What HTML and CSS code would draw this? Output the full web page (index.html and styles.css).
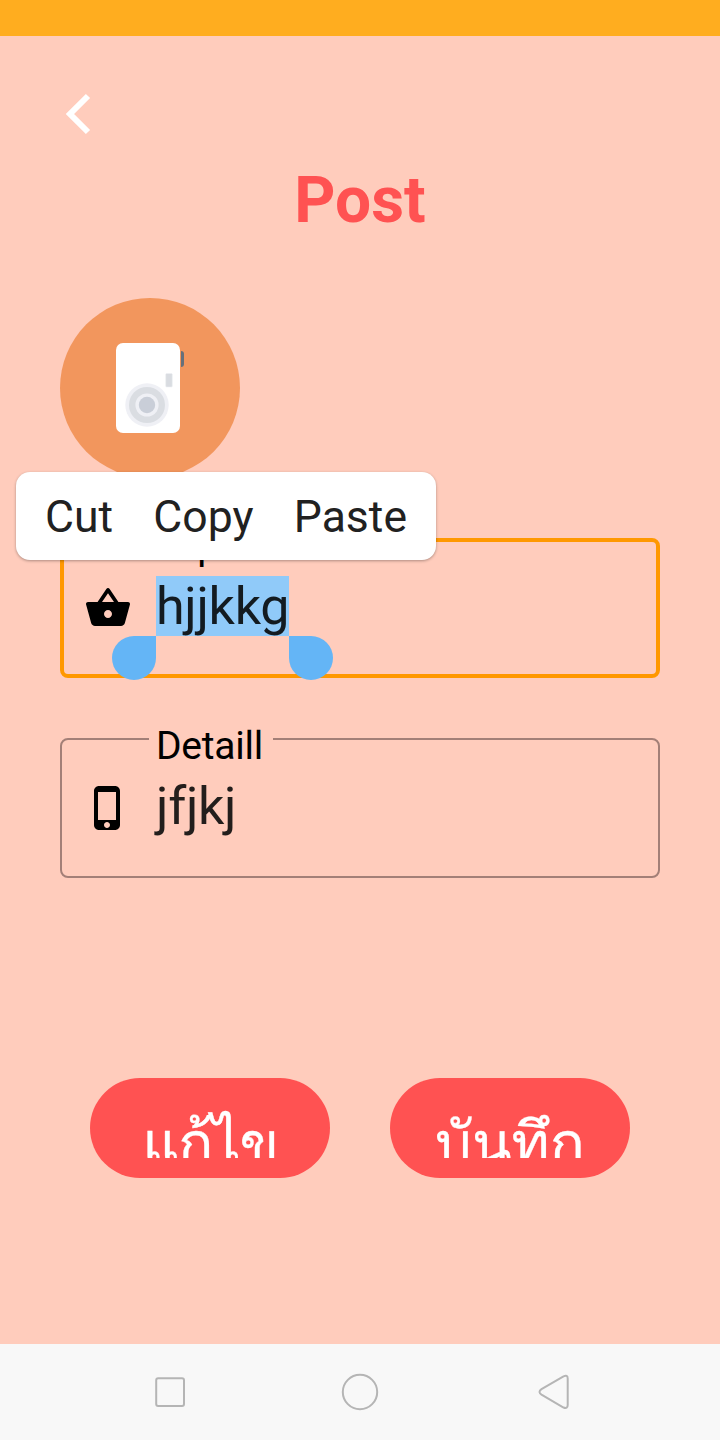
FILE: index.html
```html
<!DOCTYPE html>
<html lang="th">
<head>
<meta charset="utf-8">
<title>Post</title>
<link rel="stylesheet" href="styles.css">
</head>
<body>
<div class="screen">
  <div class="status"></div>
  <main class="content">
    <svg class="back" viewBox="0 0 30 44"><path d="M24 4 L6 22 L24 40" fill="none" stroke="#fff" stroke-width="6"/></svg>
    <h1 class="title">Post</h1>
    <svg class="avatar" viewBox="0 0 180 180">
      <circle cx="90" cy="90" r="90" fill="#f2965d"/>
      <path d="M121 53q3 0 3 3v10q0 3-3 3z" fill="#66707b"/>
      <rect x="56" y="45" width="64" height="90" rx="7" fill="#fff"/>
      <rect x="105.700" y="75.500" width="6.600" height="13.500" rx="1" fill="#d9dce1" stroke="#eff0f4" stroke-width=".6"/>
      <circle cx="87" cy="107" r="21.7" fill="#eff0f5"/>
      <circle cx="87" cy="107" r="18" fill="#dadde2"/>
      <circle cx="87" cy="107" r="11.6" fill="#eff0f5"/>
      <circle cx="87" cy="107" r="8.2" fill="#c9ced8"/>
    </svg>
    <section class="field focused">
      <span class="label">Topic</span>
      <svg class="icon" viewBox="0 0 24 24"><path d="M17.21 9l-4.38-6.56c-.19-.28-.51-.42-.83-.42-.32 0-.64.14-.83.43L6.79 9H2c-.55 0-1 .45-1 1 0 .09.01.18.04.27l2.54 9.27c.23.84 1 1.46 1.92 1.46h13c.92 0 1.69-.62 1.93-1.46l2.54-9.27L23 10c0-.55-.45-1-1-1h-4.79zM9 9l3-4.400L15 9H9zm3 8c-1.100 0-2-.9-2-2s.9-2 2-2 2 .9 2 2-.9 2-2 2z"/></svg>
      <span class="value selected">hjjkkg<i class="handle start"></i><i class="handle end"></i></span>
      <div class="toolbar"><span>Cut</span><span>Copy</span><span>Paste</span></div>
    </section>
    <section class="field">
      <span class="label">Detaill</span>
      <svg class="icon" viewBox="0 0 24 24"><path d="M15.500 1h-8C6.120 1 5 2.120 5 3.500v17C5 21.880 6.120 23 7.500 23h8c1.380 0 2.500-1.120 2.500-2.500v-17C18 2.120 16.880 1 15.500 1zm-4 21c-.83 0-1.500-.67-1.500-1.500s.67-1.500 1.500-1.500 1.500.67 1.500 1.500-.67 1.500-1.500 1.500zm4.500-4H7V4h9v14z"/></svg>
      <span class="value">jfjkj</span>
    </section>
    <div class="actions">
      <button class="action edit"><span>แก้ไข</span></button>
      <button class="action"><span>บันทึก</span></button>
    </div>
  </main>
  <nav class="navbar">
    <svg viewBox="0 0 40 40"><rect x="6.200" y="6.200" width="27.800" height="27.800" rx="2" /></svg>
    <svg viewBox="0 0 40 40"><circle cx="20" cy="20" r="17.200"/></svg>
    <svg viewBox="0 0 40 40"><path d="M11.500 17.200 L33.500 4.300 Q37.700 2.500 37.700 6.500 V33 Q37.700 37.200 33.500 35.500 L11.500 22.600 Q7.500 19.900 11.500 17.200Z"/></svg>
  </nav>
</div>
</body>
</html>
```
FILE: styles.css
```css
* { box-sizing: border-box; }
body { margin: 0; font-family: Roboto, "Noto Sans", sans-serif; }
.screen { width: 720px; height: 1440px; display: flex; flex-direction: column; background: #ffccbc; overflow: hidden; }
.status { height: 36px; background: #ffad1f; }
.content { flex: 1; padding: 56px 60px 0; display: flex; flex-direction: column; }
.back { width: 30px; height: 44px; margin-left: 4px; }
.title { margin: 27px 0 0; font-size: 64px; line-height: 76px; font-weight: 700; text-align: center; color: #ff5252; }
.avatar { width: 180px; height: 180px; margin-top: 59px; }
.field { position: relative; height: 140px; margin-top: 60px; padding: 0 22px; display: flex; align-items: center; border: 2px solid #a37f77; border-radius: 8px; }
.focused { border: 4px solid #ff9800; padding: 0 20px; }
.icon { width: 48px; height: 48px; margin-right: 24px; }
.label { position: absolute; left: 87px; top: -17px; padding: 0 10px 0 7px; background: #ffccbc; font-size: 39px; line-height: 46px; height: 46px; letter-spacing: -.25px; color: #000; }
.focused .label { left: 83px; top: -19px; }
.value { position: relative; font-size: 52px; line-height: 62px; height: 60px; letter-spacing: -.3px; margin-top: -4px; color: #231e1c; }
.selected { background: #90caf9; color: #131b21; }
.handle { position: absolute; top: 60px; width: 44px; height: 44px; background: #64b5f6; border-radius: 50%; }
.start { right: 100%; border-top-right-radius: 0; }
.end { left: 100%; border-top-left-radius: 0; }
.toolbar { position: absolute; left: -48px; top: -70px; width: 420px; height: 88px; padding: 2px 29px 0; display: flex; align-items: center; justify-content: space-between; background: #fff; border-radius: 14px; box-shadow: 0 1px 3px rgba(0,0,0,.32); font-size: 44.500px; color: #212121; }
.actions { display: flex; gap: 60px; margin: 200px 30px 0; }
.action { width: 240px; height: 100px; padding: 20px 0; border: 0; border-radius: 50px; background: #ff5252; color: #fff; font: 58px/91px Roboto, Loma, "Noto Sans Thai", sans-serif; -webkit-text-stroke: .3px #fff; }
.action span { display: block; height: 60px; overflow: hidden; }
.edit { letter-spacing: -1.500px; }
.navbar { height: 96px; background: #f8f8f8; display: flex; align-items: center; justify-content: center; gap: 150px; }
.navbar svg { width: 40px; height: 40px; fill: none; stroke: #b5b5b5; stroke-width: 2; }
```
